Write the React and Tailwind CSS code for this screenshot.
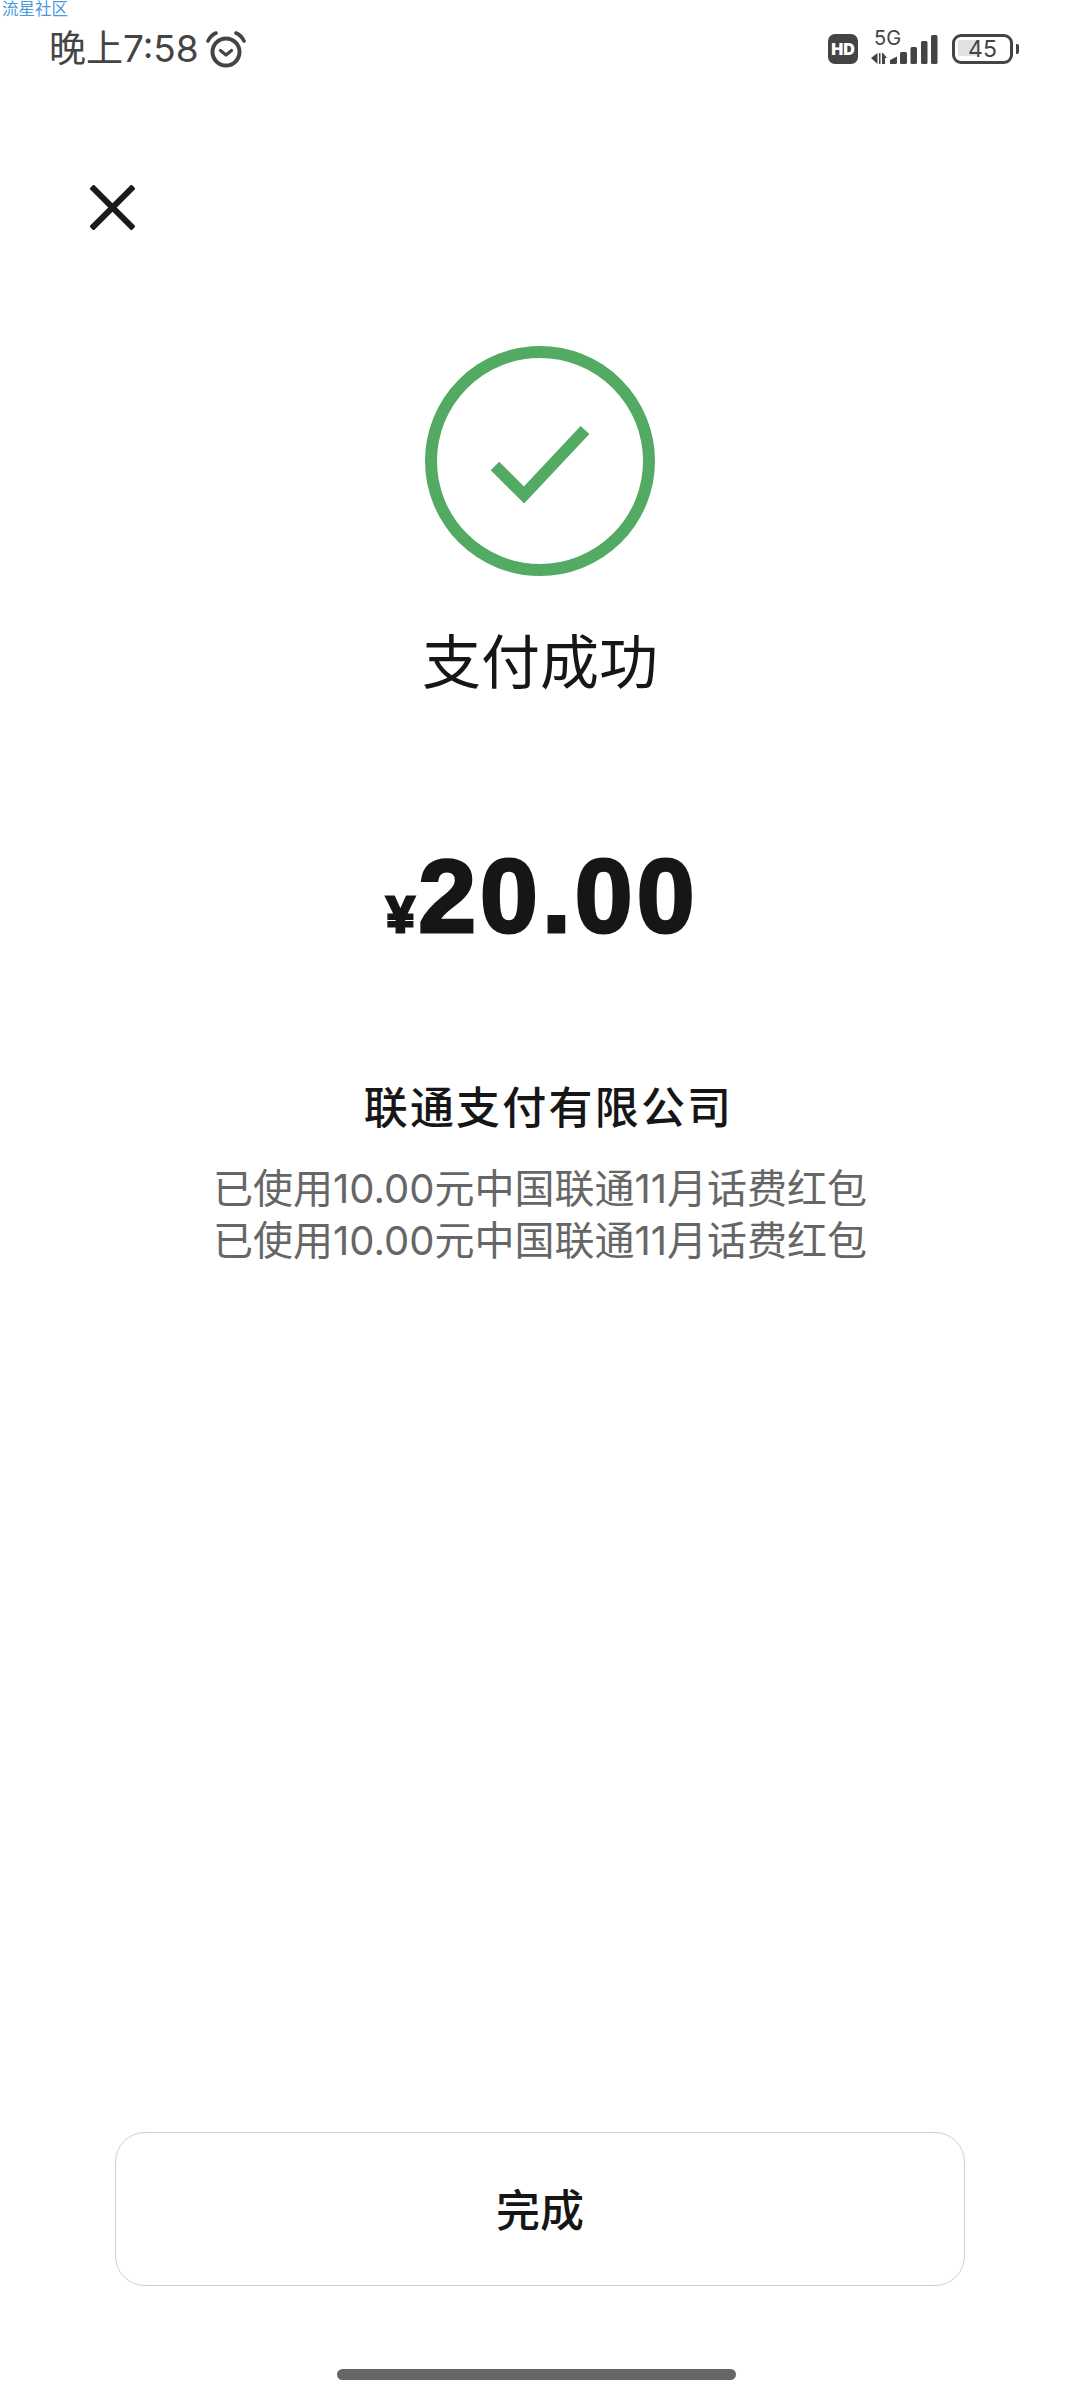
import React from "react";

const font = { fontFamily: 'Inter, "Noto Sans CJK SC", sans-serif' };

function Alarm() {
  return (
    <svg width="40" height="37" viewBox="0 0 40 37" fill="none" stroke="#444" strokeLinecap="round" strokeLinejoin="round">
      <circle cx="20" cy="21" r="13.5" strokeWidth="4" />
      <path d="M14.5 19.5 L20 24 L25.5 19.5" strokeWidth="3.2" />
      <path d="M2 10 Q4.5 4.5 10 2" strokeWidth="3.6" />
      <path d="M38 10 Q35.5 4.5 30 2" strokeWidth="3.6" />
    </svg>
  );
}

function Signal() {
  return (
    <svg width="70" height="30" viewBox="0 0 70 30" fill="#444">
      <path d="M1 24 L7.5 19 V30 Z" />
      <path d="M9 19 H10.5 V30 H9 Z" />
      <path d="M12 19 H13 L17 24 H15 V30 H12 Z" />
      <path d="M20 26 L27 22.5 V28.5 Q27 30 25.5 30 H20 Z" />
      <rect x="30" y="18" width="7" height="12" rx="1.5" />
      <rect x="40.5" y="13" width="6.5" height="17" rx="1.5" />
      <rect x="51" y="7" width="6.5" height="23" rx="1.5" />
      <rect x="61" y="1" width="6.5" height="29" rx="1.5" />
    </svg>
  );
}

export default function App() {
  return (
    <div className="relative flex h-[2400px] w-[1080px] flex-col overflow-hidden bg-white" style={font}>
      <span className="absolute left-[2px] top-0 text-[16.5px] leading-[18px] text-[#4a9ae0]">流星社区</span>

      <div className="flex h-[98px] shrink-0 items-center pl-[49px]">
        <span className="text-[37px] leading-[48px] text-[#444]">晚上7:58</span>
        <span className="ml-[7px]"><Alarm /></span>
        <div className="ml-auto mr-[61px] flex items-center">
          <div className="flex h-[30px] w-[30px] items-center justify-center rounded-[7px] bg-[#444] text-[16px] font-black text-white">HD</div>
          <div className="relative ml-[12px] h-[30px] w-[70px]">
            <span className="absolute left-[4px] top-[-6px] text-[20px] leading-[20px] text-[#444]">5G</span>
            <div className="absolute left-0 top-0 flex"><Signal /></div>
          </div>
          <div className="relative ml-[12px] flex h-[30px] w-[61px] items-center justify-center rounded-[9px] border-[3.5px] border-[#444]">
            <div className="absolute left-[3px] top-[3px] h-[16px] w-[19px] bg-[#e2e2e2]" />
            <span className="relative text-[23px] leading-[22px] text-[#444]">45</span>
          </div>
          <div className="ml-[3px] h-[10px] w-[3px] rounded-r-[2px] bg-[#444]" />
        </div>
      </div>

      <svg className="ml-[90px] mt-[87px] shrink-0" width="45" height="45" viewBox="0 0 45 45" stroke="#1a1a1a" strokeWidth="6">
        <path d="M1.5 1.5 L43.5 43.5 M43.5 1.5 L1.5 43.5" />
      </svg>

      <svg className="ml-[425px] mt-[116px] shrink-0" width="230" height="230" viewBox="0 0 230 230" fill="none" stroke="#52aa63">
        <circle cx="115" cy="115" r="109" strokeWidth="12" />
        <path d="M70 120 L99 149 L160 84" strokeWidth="12" />
      </svg>

      <div className="mt-[47px] text-center text-[59px] leading-[80px] text-[#161616]">支付成功</div>

      <div className="ml-[5px] mt-[133px] flex h-[120px] items-baseline justify-center font-bold leading-[120px] text-[#161616]" style={{ fontFamily: '"Liberation Sans", sans-serif', WebkitTextStroke: "3px #161616" }}>
        <span className="mr-[4px] text-[50px]">¥</span>
        <span className="text-[104px] tracking-[4px]">20.00</span>
      </div>

      <div className="ml-[17px] mt-[122px] text-center text-[44px] font-medium leading-[60px] tracking-[2.2px] text-[#161616]">联通支付有限公司</div>
      <div className="mt-[25px] text-center text-[40px] leading-[52px] text-[#666]">
        <div>已使用10.00元中国联通11月话费红包</div>
        <div>已使用10.00元中国联通11月话费红包</div>
      </div>

      <div className="mt-auto ml-[115px] flex h-[154px] w-[850px] items-center justify-center rounded-[30px] border-[1.5px] border-[#cfcfcf] pt-[4px] text-[44px] font-medium text-[#161616]">完成</div>
      <div className="mb-[20px] ml-[337px] mt-[83px] h-[11px] w-[399px] rounded-[6px] bg-[#666]" />
    </div>
  );
}
